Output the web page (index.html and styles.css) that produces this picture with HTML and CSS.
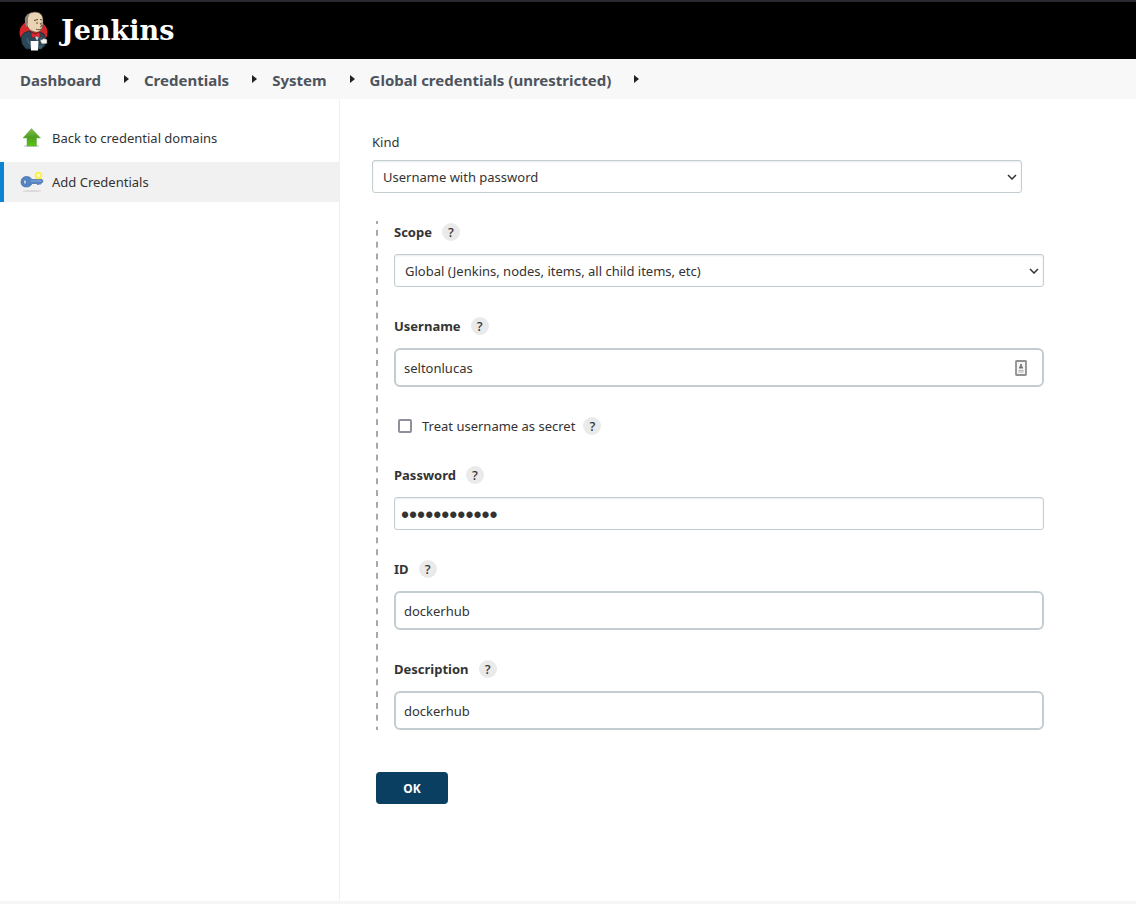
FILE: index.html
```html
<!DOCTYPE html>
<html lang="en">
<head>
<meta charset="utf-8">
<title>Jenkins - Add Credentials</title>
<link rel="stylesheet" href="styles.css">
</head>
<body>
<header class="header">
  <a class="brand" href="#">
    <svg class="brand-icon" viewBox="0 0 30 40" aria-hidden="true">
      <ellipse cx="14.500" cy="21.500" rx="14" ry="12.500" fill="#d3272b"/>
      <path d="M2 26l3-4 5-2 6 3 5-2 4 2 2 6-1 6-4 3H7l-4-5z" fill="#2b4657" stroke="#17252f" stroke-width=".7"/>
      <path d="M7 9c0-5 4-8 9-8 5 0 8 3 8 8 0 4 0 6-1 8-1 3-4 5-7 4-5-1-7-4-8-7-2-1-2-3-1-5z" fill="#ead3b3" stroke="#4a3b31" stroke-width=".6"/>
      <path d="M6 10C5 6 8 3 11 2l-2 5v5l-1 4c-2-1-2-4-2-6z" fill="#8a8379"/>
      <path d="M15 9.500l4-1m2 0l2 .500" fill="none" stroke="#5b4336" stroke-width="1"/>
      <path d="M17 12h2m3 0h1m-2 0l2 3-2 1m-4 2c2 1 4 1 5 0" fill="none" stroke="#6a4d3a" stroke-width="1"/>
      <path d="M15 24l3 6 3-6z" fill="#b9c7cf"/>
      <path d="M12 21.500l4.500 1.500 4-2 1 5.500-4-1.500-4.500 2z" fill="#e32631" stroke="#7e1319" stroke-width=".5"/>
      <path d="M8 27l2 6M23 26l-2 3" fill="none" stroke="#5c7c8f" stroke-width=".7"/>
      <path d="M11.500 30h8l-.500 9.500h-7z" fill="#fff"/>
      <path d="M21 29.500l4-2 3 1v4l-5 .500z" fill="#f5f1ec" stroke="#52606a" stroke-width=".5"/>
      <path d="M20 35l3-1.500v4l-3 .500z" fill="#3d5c70"/>
    </svg>
    <span>Jenkins</span>
  </a>
</header>
<nav class="breadcrumbs" aria-label="Breadcrumb">
  <a href="#">Dashboard</a><span class="crumb-arrow"></span>
  <a href="#">Credentials</a><span class="crumb-arrow"></span>
  <a href="#">System</a><span class="crumb-arrow"></span>
  <a href="#">Global credentials (unrestricted)</a><span class="crumb-arrow"></span>
</nav>
<div class="page">
  <aside class="side">
    <a class="task" href="#">
      <svg class="task-icon" viewBox="0 0 24 24" aria-hidden="true">
        <defs><linearGradient id="leaf" x2="0" y2="1"><stop stop-color="#83bf4e"/><stop offset=".5" stop-color="#4f9f22"/><stop offset="1" stop-color="#55c60b"/></linearGradient></defs>
        <ellipse cx="11.500" cy="20" rx="8" ry="1" fill="#c9cbc7"/>
        <path d="M11.500 2.500l9 9.500h-4v8h-9.500v-8h-4z" fill="url(#leaf)" stroke="#6bab4a" stroke-width=".5"/>
      </svg>
      <span>Back to credential domains</span>
    </a>
    <a class="task task-active" href="#" aria-current="page">
      <svg class="task-icon" viewBox="0 0 24 24" aria-hidden="true">
        <ellipse cx="12" cy="21" rx="9.500" ry="1" fill="#d9d9d9"/>
        <path d="M6.500 6.500c3 0 4.500 1.500 5.500 3h10l1 1.500-1 2h-1l-1 1.500-1-1-1 1.500-1.500-1.500H12c-1 2.500-3 3.500-5.500 3.500C3 17 1 15 1 12s2-5.500 5.500-5.500z" fill="#5686c2" stroke="#3d6aa8" stroke-width=".7"/>
        <path d="M11 11h10.500" stroke="#94b6de" stroke-width=".8"/>
        <ellipse cx="5" cy="12" rx="1.200" ry="2.200" fill="#f1f1f1" stroke="#2f5f9e" stroke-width=".6"/>
        <circle cx="18.500" cy="5.500" r="3.800" fill="#fdf04e"/>
        <circle cx="18.500" cy="5.500" r="1.700" fill="#fffbd0"/>
      </svg>
      <span>Add Credentials</span>
    </a>
  </aside>
  <main class="main">
    <form>
      <div class="kind">
        <label class="kind-label" for="kind">Kind</label>
        <div class="select">
          <select class="control" id="kind"><option>Username with password</option></select>
          <svg class="chevron" viewBox="0 0 10 6" aria-hidden="true"><path d="M1 1l4 4 4-4"/></svg>
        </div>
      </div>
      <div class="group">
        <div class="field">
          <div class="label-row"><label for="scope">Scope</label><button class="help" type="button" aria-label="Help for Scope">?</button></div>
          <div class="select">
            <select class="control" id="scope"><option>Global (Jenkins, nodes, items, all child items, etc)</option></select>
            <svg class="chevron" viewBox="0 0 10 6" aria-hidden="true"><path d="M1 1l4 4 4-4"/></svg>
          </div>
        </div>
        <div class="field">
          <div class="label-row"><label for="username">Username</label><button class="help" type="button" aria-label="Help for Username">?</button></div>
          <div class="with-badge">
            <input class="control control-large" id="username" type="text" value="seltonlucas">
            <svg class="autofill" viewBox="0 0 12 16" aria-hidden="true">
              <rect x="1" y="1" width="10" height="14" rx=".5" fill="#f5f5f5" stroke="#909090" stroke-width="1.800"/>
              <path d="M6 4v2" stroke="#888" stroke-width="2"/><path d="M4 8.500V7l2-1.500L8 7v1.500z" fill="#777"/>
              <path d="M3.500 10.500h5M3.500 12h5" stroke="#b5b5b5"/>
            </svg>
          </div>
        </div>
        <div class="check-row">
          <input class="check" id="secret" type="checkbox"><label for="secret">Treat username as secret</label><button class="help" type="button" aria-label="Help for Treat username as secret">?</button>
        </div>
        <div class="field">
          <div class="label-row"><label for="password">Password</label><button class="help" type="button" aria-label="Help for Password">?</button></div>
          <input class="control control-password" id="password" type="password" value="abcdefghijkl">
        </div>
        <div class="field">
          <div class="label-row"><label for="cred-id">ID</label><button class="help" type="button" aria-label="Help for ID">?</button></div>
          <input class="control control-large" id="cred-id" type="text" value="dockerhub">
        </div>
        <div class="field">
          <div class="label-row"><label for="description">Description</label><button class="help" type="button" aria-label="Help for Description">?</button></div>
          <input class="control control-large" id="description" type="text" value="dockerhub">
        </div>
      </div>
      <button class="submit" type="submit">OK</button>
    </form>
  </main>
</div>
<footer class="footer"></footer>
</body>
</html>
```
FILE: styles.css
```css
* {
  box-sizing: border-box;
}

body {
  display: flex;
  flex-direction: column;
  min-height: 100vh;
  margin: 0;
  background: #fff;
  color: #333;
  font: 13px/22px "Noto Sans", "Open Sans", sans-serif;
}

a {
  color: inherit;
  text-decoration: none;
}

input,
select,
button {
  color: inherit;
  font: inherit;
}

.header {
  display: flex;
  align-items: center;
  height: 59px;
  padding-left: 19px;
  border-top: 2px solid #2b2a33;
  background: #000;
}

.brand {
  display: flex;
  align-items: center;
  gap: 12px;
  color: #fff;
  font: bold 27px/40px "DejaVu Serif", serif;
}

.brand-icon {
  width: 30px;
  height: 40px;
}

.breadcrumbs {
  display: flex;
  align-items: center;
  height: 40px;
  padding: 2px 20px 0;
  background: #f8f8f8;
  color: #4d545d;
  font-size: 15px;
  font-weight: 700;
  white-space: nowrap;
}

.crumb-arrow {
  margin: 0 15px 3px 23px;
  border: 4px solid transparent;
  border-right-width: 0;
  border-left: 5px solid #222;
}

.page {
  display: flex;
  flex: 1;
}

.side {
  display: flex;
  flex-direction: column;
  flex: 0 0 340px;
  gap: 4px;
  padding-top: 19px;
  border-right: 1px solid #f0f0f0;
}

.task {
  display: flex;
  align-items: center;
  gap: 8px;
  height: 40px;
  padding-left: 16px;
  border-left: 4px solid transparent;
}

.task-active {
  border-left-color: #0b85d2;
  background: #f1f1f1;
}

.task-icon {
  width: 24px;
  height: 24px;
}

.main {
  flex: 1;
  min-width: 0;
  padding: 32px 92px 32px 32px;
}

.kind {
  margin: 0 22px 28px 0;
}

.kind-label {
  display: block;
  margin-bottom: 7px;
}

.group {
  margin: 0 0 42px 4px;
  padding-left: 18px;
  background: linear-gradient(#a8a8a8 25%, transparent 25% 75%, #a8a8a8 75%) left top / 2px calc(100% / 43) repeat-y;
}

.field {
  margin-bottom: 28px;
}

.field:last-child {
  margin-bottom: 0;
}

.label-row {
  display: flex;
  align-items: center;
  gap: 10px;
  margin-bottom: 11px;
  font-weight: 700;
}

.help {
  width: 18px;
  height: 18px;
  padding: 0;
  border: 0;
  border-radius: 50%;
  background: #eaeaea;
  font-weight: 500;
  line-height: 18px;
}

.select,
.with-badge {
  position: relative;
}

.control {
  display: block;
  width: 100%;
  height: 33px;
  padding: 0 10px;
  border: 1px solid #c3cdd1;
  border-radius: 3px;
  background: #fff;
  box-shadow: inset 0 1px 2px #e8ecee;
  appearance: none;
}

.control-large {
  height: 39px;
  padding: 0 8px;
  border-width: 2px;
  border-radius: 6px;
  box-shadow: none;
}

.control-password {
  padding: 3px 6px 0;
  font-family: "Liberation Sans", Arial, sans-serif;
  font-size: 23px;
}

.chevron {
  position: absolute;
  top: 14px;
  right: 5px;
  width: 10px;
  height: 6px;
  fill: none;
  stroke: #333;
  stroke-width: 1.5;
  pointer-events: none;
}

.autofill {
  position: absolute;
  top: 12px;
  right: 17px;
  width: 12px;
  height: 16px;
}

.check-row {
  display: flex;
  align-items: center;
  gap: 8px;
  margin-bottom: 27px;
}

.check {
  width: 14px;
  height: 14px;
  margin: 0 2px 0 4px;
  border: 2px solid #8f8f9d;
  border-radius: 2px;
  background: #fff;
  appearance: none;
}

.check:checked {
  background: #0b85d2;
}

.submit {
  display: block;
  min-width: 72px;
  height: 32px;
  margin-left: 4px;
  padding-top: 2px;
  border: 0;
  border-radius: 4px;
  background: #0b3f61;
  color: #fff;
  font-size: 12px;
  font-weight: 700;
}

.footer {
  height: 3px;
  background: #f6f6f6;
}
```
